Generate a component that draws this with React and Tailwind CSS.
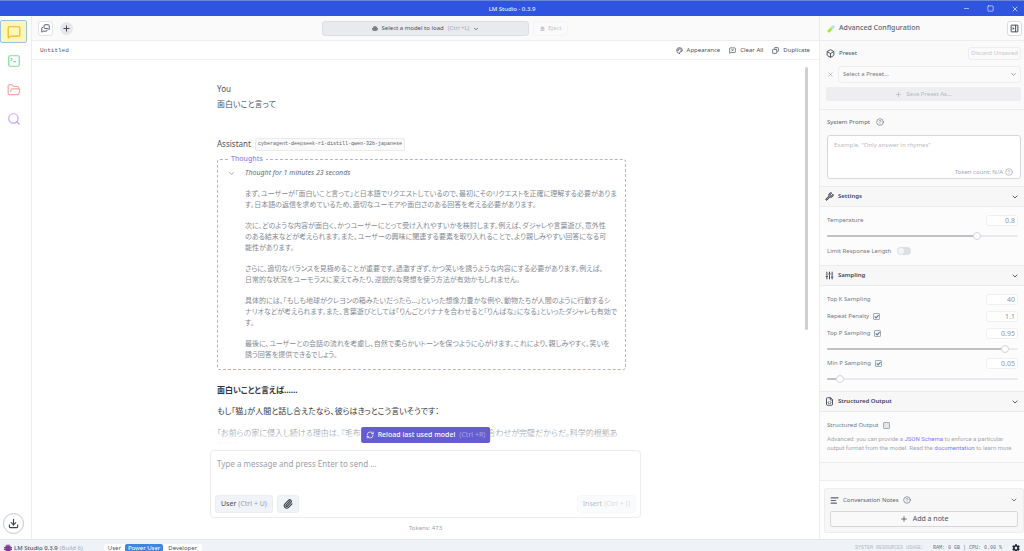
import React from "react";
import {
  Box, ChevronDown, CircleHelp, Copy, Download, FileCode, FolderOpen, MessageSquare, MessagesSquare,
  MessageSquareX, Minus, Palette, Paperclip, Plus, RefreshCw, Search, SlidersVertical,
  Square, SquareTerminal, TextAlignStart, Wrench, X,
} from "lucide-react";
import { FaCog } from "react-icons/fa";

const thoughts = [
  [
    "まず、ユーザーが「面白いこと言って」と日本語でリクエストしているので、最初にそのリクエストを正確に理解する必要がありま",
    "す。日本語の返信を求めているため、適切なユーモアや面白さのある回答を考える必要があります。",
  ],
  [
    "次に、どのような内容が面白く、かつユーザーにとって受け入れやすいかを検討します。例えば、ダジャレや言葉遊び、意外性",
    "のある結末などが考えられます。また、ユーザーの興味に関連する要素を取り入れることで、より親しみやすい回答になる可",
    "能性があります。",
  ],
  [
    "さらに、適切なバランスを見極めることが重要です。過激すぎず、かつ笑いを誘うような内容にする必要があります。例えば、",
    "日常的な状況をユーモラスに変えてみたり、逆説的な発想を使う方法が有効かもしれません。",
  ],
  [
    "具体的には、「もしも地球がクレヨンの箱みたいだったら...」といった想像力豊かな例や、動物たちが人間のように行動するシ",
    "ナリオなどが考えられます。また、言葉遊びとしては「りんごとバナナを合わせると『りんばな』になる」といったダジャレも有効で",
    "す。",
  ],
  [
    "最後に、ユーザーとの会話の流れを考慮し、自然で柔らかいトーンを保つように心がけます。これにより、親しみやすく、笑いを",
    "誘う回答を提供できるでしょう。",
  ],
];

function TitleBar() {
  return (
    <header className="flex h-4 shrink-0 items-center border-t border-[#6f86d8] bg-[#2f55e0] text-white">
      <div className="flex-1" />
      <h1 className="text-[6px] leading-[8px]">LM Studio - 0.3.9</h1>
      <div className="flex flex-1 justify-end">
        <div className="flex items-center gap-[17px] pr-[5px]">
          <button aria-label="Minimize"><Minus size={7} strokeWidth={2} /></button>
          <button aria-label="Maximize"><Square size={7} strokeWidth={2} /></button>
          <button aria-label="Close"><X size={8} strokeWidth={2} /></button>
        </div>
      </div>
    </header>
  );
}

function Rail() {
  return (
    <nav className="flex w-8 shrink-0 flex-col border-r border-[#ececee] bg-white pt-1">
      <button aria-label="Chat" className="flex h-[23px] w-[27px] items-center justify-center rounded-[2px] border border-[#9dc1e4] bg-[#fef6b8]">
        <MessageSquare size={14} strokeWidth={2} className="text-[#eab91c]" />
      </button>
      <div className="mt-[11px] flex w-[27px] flex-col items-center gap-[15px]">
        <button aria-label="Developer"><SquareTerminal size={14} className="text-[#7ddba0]" /></button>
        <button aria-label="My models"><FolderOpen size={14} className="text-[#f7a3a3]" /></button>
        <button aria-label="Discover"><Search size={14} className="text-[#cf9ef8]" /></button>
      </div>
      <div className="flex-1" />
      <button aria-label="Downloads" className="mb-[5px] ml-[3px] flex size-[21px] items-center justify-center rounded-full border border-[#c3c6cf] bg-white text-[#3c4250]">
        <Download size={11} strokeWidth={2.4} />
      </button>
    </nav>
  );
}

function TopBar() {
  return (
    <div className="flex h-[25px] shrink-0 items-center border-b border-[#ececee] bg-[#fafafa] px-[6px] pt-px">
      <div className="flex flex-1 items-center gap-[7px]">
        <button aria-label="Chats" className="flex size-[15px] items-center justify-center rounded-[3px] border border-[#e2e3e6] bg-white text-[#4a4f5c]">
          <MessagesSquare size={9} strokeWidth={2.4} className="-scale-x-100" />
        </button>
        <button aria-label="New chat" className="flex size-[13px] items-center justify-center rounded-full bg-[#e5e7eb] text-[#3f4451]">
          <Plus size={9} strokeWidth={2.6} />
        </button>
      </div>
      <button className="flex h-[15px] w-[207px] items-center justify-center gap-1 rounded-[3px] border border-[#dcdee2] bg-[#e8eaee] text-[6px] text-[#4b5160]">
        <svg width="6" height="5" viewBox="0 0 12 10" className="text-[#7a808c]"><path fill="currentColor" d="M0 6V4h1.500C2 1.500 4 0 6 0s4 1.500 4.500 4H12v2h-1v1h1v1.500H9.500L9 10H3l-.5-1.500H0V7h1V6z" /></svg>
        <span>Select a model to load</span>
        <span className="text-[#a7abb4]">(Ctrl +L)</span>
        <ChevronDown size={6} strokeWidth={3} />
      </button>
      <div className="flex flex-1">
        <button className="ml-1 flex h-[15px] items-center gap-[3px] rounded-[3px] border border-[#f5f5f6] px-[6px] text-[6px] text-[#c3c5ca]">
          <svg width="5" height="5" viewBox="0 0 10 10"><path fill="currentColor" d="M5 0l4 4v3H1V4zM1 8h8v2H1z" /></svg>
          Eject
        </button>
      </div>
    </div>
  );
}

function ChatHeader() {
  return (
    <div className="flex h-[19px] shrink-0 items-center justify-between border-b border-[#f3f3f4] pl-2 pr-[9px]">
      <h2 className="font-['Liberation_Mono',monospace] text-[6px] text-[#555a66]">Untitled</h2>
      <div className="flex gap-[9px] text-[6px] text-[#4b5160]">
        <button className="flex items-center gap-1"><Palette size={7} strokeWidth={2.4} />Appearance</button>
        <button className="flex items-center gap-1"><MessageSquareX size={7} strokeWidth={2.4} />Clear All</button>
        <button className="flex items-center gap-1"><Copy size={7} strokeWidth={2.6} className="-scale-x-100" />Duplicate</button>
      </div>
    </div>
  );
}

function Messages() {
  return (
    <div className="relative min-h-0 flex-1 overflow-hidden pr-2">
      <div lang="ja" className="mx-auto w-[409px] pt-[23px] text-[8px] leading-[12px] text-[#4d535f]">
        <div>You</div>
        <p className="mt-[3px] [font-feature-settings:'palt']">面白いこと言って</p>
        <div className="mt-[27px] flex h-[14px] items-center gap-1">
          <span>Assistant</span>
          <span className="flex h-[13px] items-center rounded-[2px] border border-[#e9eaec] bg-[#fafafa] px-[2px] font-['Liberation_Mono',monospace] text-[5px] text-[#5b606c]">
            cyberagent-deepseek-r1-distill-qwen-32b-japanese
          </span>
        </div>
        <fieldset className="mt-[3px] rounded-[3px] border border-dashed border-[#b3aeea] pb-[9px] pl-[10px] text-[7px]">
          <legend className="px-[3px] font-medium leading-[10px] text-[#8e86e2]">Thoughts</legend>
          <button className="mt-[2px] flex h-[14px] items-center gap-[10px] text-[#666b76]">
            <ChevronDown size={7} strokeWidth={2} />
            <span className="italic">Thought for 1 minutes 23 seconds</span>
          </button>
          <div className="mt-2 flex flex-col gap-[10px] whitespace-nowrap pl-[17px] leading-[11px] text-[#858a94] [font-feature-settings:'palt']">
            {thoughts.map((lines) => (
              <p key={lines[0]}>
                {lines.map((line) => <span key={line} className="block">{line}</span>)}
              </p>
            ))}
          </div>
        </fieldset>
        <div className="whitespace-nowrap text-[#33363d] [font-feature-settings:'palt']">
          <h3 className="mt-[14px] font-bold">面白いことと言えば......</h3>
          <p className="mt-[9px]">もし「猫」が人間と話し合えたなら、彼らはきっとこう言いそうです：</p>
          <p className="mt-[10px] text-[#6b6f78]">
            「お前らの家に侵入し続ける理由は、『毛布と最高のおやつと人間の膝』との組み合わせが完璧だからだ。科学的根拠あ
            <br />
            りだよ。」
          </p>
        </div>
      </div>
      <div className="pointer-events-none absolute inset-x-0 bottom-0 h-7 bg-gradient-to-b from-transparent to-white to-80%" />
      <div className="absolute right-[11px] top-[7px] h-[263px] w-[3px] rounded-full bg-[#cfcfd1]" />
      <button className="absolute bottom-[7px] left-1/2 flex h-4 -translate-x-1/2 items-center gap-1 whitespace-nowrap rounded-[2px] bg-[#655cd0] px-[5px] text-[7px] text-white">
        <RefreshCw size={8} strokeWidth={2.2} />
        <span className="font-medium">Reload last used model</span>
        <span className="text-[#aaa5ea]">(Ctrl +R)</span>
      </button>
    </div>
  );
}

function Composer() {
  return (
    <div className="flex shrink-0 flex-col items-center">
      <div className="flex w-[431px] flex-col rounded-[4px] border border-[#ececee] bg-white px-1 pb-1 pt-[6px]">
        <textarea
          aria-label="Message"
          placeholder="Type a message and press Enter to send ..."
          className="h-[38px] resize-none px-[2px] py-px text-[8px] leading-[12px] outline-none placeholder:text-[#9ca0a9]"
        />
        <div className="flex h-[18px] gap-1 text-[7px]">
          <button className="flex items-center gap-[2px] rounded-[3px] border border-[#eaedf2] bg-[#f0f3f8] px-[5px] text-[#474c59]">
            User <span className="text-[#9a9fa9]">(Ctrl + U)</span>
          </button>
          <button aria-label="Attach file" className="flex w-[22px] items-center justify-center rounded-[3px] border border-[#eaedf2] bg-[#f0f3f8] text-[#3f4451]">
            <Paperclip size={10} strokeWidth={2.8} />
          </button>
          <div className="flex-1" />
          <button className="flex items-center gap-[2px] rounded-[3px] border border-[#f7f8f9] bg-[#fafbfc] px-[5px] text-[#bcbfc6]">
            Insert <span className="text-[#d9dbdf]">(Ctrl + I)</span>
          </button>
        </div>
      </div>
      <div className="flex h-[21px] items-center text-[6px] text-[#9b9fa8]">Tokens: 473</div>
    </div>
  );
}

function Section({ icon, title, children }) {
  return (
    <section>
      <button className="flex h-[21px] w-full items-center gap-1 border-y border-[#ebebed] bg-[#f7f7f8] px-[5px] text-[#3f4451]">
        {icon}
        <span className="flex-1 text-left text-[6px] font-semibold">{title}</span>
        <ChevronDown size={8} strokeWidth={2.6} />
      </button>
      {children}
    </section>
  );
}

function Field({ id, label, value, checkable }) {
  return (
    <div className="flex h-[17px] items-center gap-1 pr-[2px]">
      <label htmlFor={id}>{label}</label>
      {checkable && <Tick label={`Enable ${label}`} checked />}
      <div className="flex-1" />
      <input id={id} defaultValue={value} className="h-[11px] w-8 rounded-[3px] border border-[#f0f0f1] bg-white px-[2px] text-right text-[7px] text-[#93969d] outline-none" />
    </div>
  );
}

function Tick({ label, checked, id }) {
  return (
    <span className="relative flex size-[7px]">
      <input
        id={id}
        type="checkbox"
        aria-label={label}
        defaultChecked={checked}
        className="peer size-[7px] appearance-none rounded-[1px] border border-[#a4abb6] bg-[#e3e6ea] checked:bg-[#f4f8fb]"
      />
      <svg viewBox="0 0 10 10" className="pointer-events-none absolute inset-0 hidden size-[7px] peer-checked:block">
        <path d="M2.500 5l2 2 3.500-4" fill="none" stroke="#5d7f96" strokeWidth="1.600" />
      </svg>
    </span>
  );
}

function Slider({ label, value }) {
  const [v, setV] = React.useState(value);
  return (
    <div className="flex h-[13px] items-center pr-[2px]">
      <input
        type="range"
        aria-label={label}
        min="0"
        max="100"
        value={v}
        onChange={(e) => setV(Number(e.target.value))}
        style={{ backgroundImage: `linear-gradient(to right, #bfc0c3 ${v}%, #e9eaed ${v}%)` }}
        className="h-[2px] w-full appearance-none rounded-full [&::-webkit-slider-thumb]:size-2 [&::-webkit-slider-thumb]:appearance-none [&::-webkit-slider-thumb]:rounded-full [&::-webkit-slider-thumb]:border [&::-webkit-slider-thumb]:border-[#d3d5da] [&::-webkit-slider-thumb]:bg-white"
      />
    </div>
  );
}

function ConfigPanel() {
  return (
    <aside className="flex w-[205px] shrink-0 flex-col border-l border-[#ececee] bg-[#fcfcfc] text-[6px] text-[#737883]">
      <div className="flex h-[25px] shrink-0 items-center gap-1 border-b border-[#ececee] bg-[#fafafa] pl-[7px] pr-[2px] pt-px">
        <svg width="8" height="8" viewBox="0 0 16 16">
          <path d="M3.500 12.500L12 4" stroke="#a5e635" strokeWidth="5" strokeLinecap="round" />
          <path d="M10.500 5.500L13 3" stroke="#b9e3f3" strokeWidth="5" strokeLinecap="round" />
        </svg>
        <h2 className="flex-1 text-[7px] font-medium text-[#5f6470]">Advanced Configuration</h2>
        <button aria-label="Hide panel" className="flex size-[15px] items-center justify-center rounded-[3px] border border-[#d9dbdf] bg-white text-[#3f4451]">
          <svg width="9" height="9" viewBox="0 0 24 24" fill="none" stroke="currentColor" strokeWidth="2.600">
            <rect x="3" y="3" width="18" height="18" rx="1" />
            <path d="M15 3v18" />
            <path d="M7 8l5 4-5 4z" fill="currentColor" stroke="none" />
          </svg>
        </button>
      </div>

      <div className="flex h-[68px] shrink-0 flex-col bg-[#fafafa] pl-[6px] pr-[3px] pt-[6px]">
        <div className="flex h-[13px] items-center gap-1 text-[#4b5160]">
          <Box size={9} strokeWidth={2.6} />
          <label htmlFor="preset" className="flex-1">Preset</label>
          <button className="h-[13px] rounded-[3px] border border-[#ededef] px-[2px] text-[#c5c8ce]">Discard Unsaved</button>
        </div>
        <div className="mt-[6px] flex h-[17px] items-center gap-1">
          <button aria-label="Clear preset" className="flex w-2 justify-center text-[#9a9ea7]"><X size={7} /></button>
          <div className="relative flex flex-1">
            <select id="preset" className="h-[17px] w-full appearance-none rounded-[3px] border border-[#ededef] bg-[#fafafa] px-1 text-[6px] text-[#747984] outline-none">
              <option>Select a Preset...</option>
            </select>
            <ChevronDown size={7} strokeWidth={2.4} className="pointer-events-none absolute right-1 top-[5px]" />
          </div>
        </div>
        <button className="mt-1 flex h-[14px] items-center justify-center gap-1 rounded-[2px] bg-[#eeeef0] text-[#b5b8bf]">
          <Plus size={7} strokeWidth={2.4} />Save Preset As...
        </button>
      </div>

      <div className="flex h-[77px] shrink-0 flex-col border-t border-[#ececee] bg-[#fafafa] pl-[7px] pr-[3px] pt-[6px]">
        <div className="flex h-[12px] items-center gap-[6px] text-[#5f6470]">
          <label htmlFor="system-prompt">System Prompt</label>
          <CircleHelp size={8} strokeWidth={1.8} />
        </div>
        <div className="mt-[7px] flex h-11 flex-col rounded-[3px] border border-[#d5d7db] bg-white">
          <textarea
            id="system-prompt"
            placeholder='Example, "Only answer in rhymes"'
            className="min-h-0 flex-1 resize-none px-[6px] pt-[5px] text-[6px] leading-[8px] outline-none placeholder:text-[#b9bcc3]"
          />
          <div className="flex h-[12px] items-center justify-end gap-[2px] pr-[7px] text-[#a3a7b0]">
            Token count: N/A <CircleHelp size={8} />
          </div>
        </div>
      </div>

      <Section icon={<Wrench size={9} strokeWidth={2.4} className="fill-[#8c909a]" />} title="Settings">
        <div className="flex h-[58px] flex-col pl-[7px] pr-1 pt-[5px]">
          <Field id="temperature" label="Temperature" value="0.8" />
          <Slider label="Temperature slider" value={80} />
          <label className="mt-[2px] flex h-[14px] items-center gap-[6px]">
            Limit Response Length
            <input
              type="checkbox"
              role="switch"
              className="relative h-2 w-[14px] appearance-none rounded-full bg-[#dcdfe4] before:absolute before:left-px before:top-px before:size-[6px] before:rounded-full before:bg-[#f3f4f6]"
            />
          </label>
        </div>
      </Section>

      <Section icon={<SlidersVertical size={9} strokeWidth={2.6} />} title="Sampling">
        <div className="flex h-[105px] flex-col pl-[7px] pr-1 pt-[5px]">
          <Field id="top-k" label="Top K Sampling" value="40" />
          <Field id="repeat" label="Repeat Penalty" value="1.1" checkable />
          <Field id="top-p" label="Top P Sampling" value="0.95" checkable />
          <Slider label="Top P slider" value={95} />
          <Field id="min-p" label="Min P Sampling" value="0.05" checkable />
          <Slider label="Min P slider" value={5} />
        </div>
      </Section>

      <Section icon={<FileCode size={9} strokeWidth={2.4} />} title="Structured Output">
        <div className="flex h-[50px] flex-col pl-[7px] pt-[7px]">
          <div className="flex h-[12px] items-center gap-1">
            <label htmlFor="structured">Structured Output</label>
            <Tick id="structured" />
          </div>
          <p className="mt-[3px] whitespace-nowrap font-[Roboto,sans-serif] leading-[9px] text-[#a5a8b0]">
            Advanced: you can provide a <a href="#schema" className="text-[#7c7cf5]">JSON Schema</a> to enforce a particular
            <br />
            output format from the model. Read the <a href="#docs" className="text-[#7c7cf5]">documentation</a> to learn more
          </p>
        </div>
      </Section>

      <div className="min-h-0 flex-1 border-y border-[#ececee] bg-[#fafafa]" />

      <div className="shrink-0 bg-white pb-[6px] pl-1 pt-[7px]">
        <div className="rounded-[2px] border border-[#ededef] bg-[#f7f7f8] px-[5px] pb-[5px]">
          <div className="flex h-[22px] items-center gap-1 text-[#5f6470]">
            <TextAlignStart size={9} strokeWidth={3} />
            <span>Conversation Notes</span>
            <CircleHelp size={8} strokeWidth={1.8} />
            <div className="flex-1" />
            <button aria-label="Collapse notes"><ChevronDown size={8} strokeWidth={2.6} /></button>
          </div>
          <button className="flex h-4 w-full items-center justify-center gap-[5px] rounded-[2px] border border-[#d5d7db] bg-[#f9f9fa] text-[7px] text-[#4b5160]">
            <Plus size={8} strokeWidth={2.4} />Add a note
          </button>
        </div>
      </div>
    </aside>
  );
}

function StatusBar() {
  return (
    <footer className="flex h-3 shrink-0 items-center justify-between overflow-hidden border-t border-[#e4e8ee] bg-[#eff3f8] pl-1 pr-1 pt-[4px] text-[6px] leading-[8px] text-[#4b5160]">
      <div className="flex items-center">
        <svg width="8" height="8" viewBox="0 0 16 16" className="text-[#7d3c98]">
          <path fill="currentColor" d="M5 1h2v2h2V1h2v2h2v3h3v3h-3v1h3v2h-3v2h-2v2H9v-2H7v2H5v-2H3v-2H0v-2h3V9H0V6h3V3h2z" />
        </svg>
        <span className="ml-[2px] font-medium">LM Studio 0.3.9</span>
        <span className="ml-[2px] text-[#a3a8b2]">(Build 6)</span>
        <div className="ml-[21px] flex rounded-[2px] bg-white">
          <button className="px-1">User</button>
          <button className="rounded-[2px] bg-[#3f87dc] px-[3px] text-white">Power User</button>
          <button className="px-[5px]">Developer</button>
        </div>
      </div>
      <div className="flex items-center font-['Liberation_Mono',monospace] text-[5px]">
        <span className="mr-[9px] text-[#b4b9c2]">SYSTEM RESOURCES USAGE:</span>
        <span className="mr-[10px] whitespace-pre text-[#6c727e]">RAM: 0 GB | CPU: 0.00 %</span>
        <button aria-label="Settings"><FaCog size={8} className="text-[#232936]" /></button>
      </div>
    </footer>
  );
}

export default function App() {
  return (
    <div className="flex h-screen flex-col overflow-hidden bg-white font-['Noto_Sans','Noto_Sans_CJK_JP',sans-serif]">
      <TitleBar />
      <div className="flex min-h-0 flex-1">
        <Rail />
        <main className="flex min-w-0 flex-1 flex-col bg-white">
          <TopBar />
          <ChatHeader />
          <Messages />
          <Composer />
        </main>
        <ConfigPanel />
      </div>
      <StatusBar />
    </div>
  );
}
